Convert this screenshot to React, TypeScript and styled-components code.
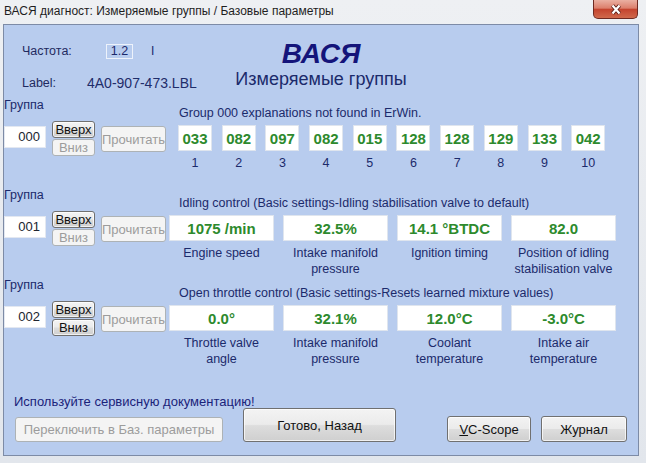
import React from 'react'
import styled, { createGlobalStyle } from 'styled-components'

const GlobalStyle = createGlobalStyle`
  html, body {
    margin: 0;
    padding: 0;
  }
  body {
    font-family: "Liberation Sans", Arial, sans-serif;
    background: #e9ecf0;
  }
`

interface Cell {
  value: string
  caption: string
}

interface Group {
  id: string
  desc: string
  downEnabled: boolean
  dense: boolean
  cells: Cell[]
}

const rawBlock = ['033', '082', '097', '082', '015', '128', '128', '129', '133', '042']

const groups: Group[] = [
  {
    id: '000',
    desc: 'Group 000 explanations not found in ErWin.',
    downEnabled: false,
    dense: true,
    cells: rawBlock.map((v, i) => ({ value: v, caption: String(i + 1) })),
  },
  {
    id: '001',
    desc: 'Idling control (Basic settings-Idling stabilisation valve to default)',
    downEnabled: false,
    dense: false,
    cells: [
      { value: '1075 /min', caption: 'Engine speed' },
      { value: '32.5%', caption: 'Intake manifold\npressure' },
      { value: '14.1 °BTDC', caption: 'Ignition timing' },
      { value: '82.0', caption: 'Position of idling\nstabilisation valve' },
    ],
  },
  {
    id: '002',
    desc: 'Open throttle control (Basic settings-Resets learned mixture values)',
    downEnabled: true,
    dense: false,
    cells: [
      { value: '0.0°', caption: 'Throttle valve\nangle' },
      { value: '32.1%', caption: 'Intake manifold\npressure' },
      { value: '12.0°C', caption: 'Coolant\ntemperature' },
      { value: '-3.0°C', caption: 'Intake air\ntemperature' },
    ],
  },
]

export default function App() {
  return (
    <>
      <GlobalStyle />
      <Window>
        <TitleBar>
          <Caption>ВАСЯ диагност: Измеряемые группы / Базовые параметры</Caption>
          <CloseButton>
            <svg width="14" height="11" viewBox="0 0 14 11">
              <path d="M3.5 1.5 L10.5 9.5 M10.5 1.5 L3.5 9.5" stroke="#5b1d16" strokeWidth="4" />
              <path d="M3.5 1.5 L10.5 9.5 M10.5 1.5 L3.5 9.5" stroke="#ffffff" strokeWidth="2.2" />
            </svg>
          </CloseButton>
        </TitleBar>

        <Client>
          <Header>
            <Info>
              <InfoLabel>Частота:</InfoLabel>
              <FreqRow>
                <FreqBox>1.2</FreqBox>
                <Tick>I</Tick>
              </FreqRow>
              <InfoLabel>Label:</InfoLabel>
              <LabelFile>4A0-907-473.LBL</LabelFile>
            </Info>
            <TitleBlock>
              <Brand>ВАСЯ</Brand>
              <Subtitle>Измеряемые группы</Subtitle>
            </TitleBlock>
            <div />
          </Header>

          {groups.map(g => (
            <GroupBlock key={g.id}>
              <GroupLabel>Группа</GroupLabel>
              <GroupDesc>{g.desc}</GroupDesc>
              <Controls>
                <NumberBox>{g.id}</NumberBox>
                <StepColumn>
                  <Btn $w={43} $h={17}>Вверх</Btn>
                  <Btn $w={43} $h={17} disabled={!g.downEnabled}>Вниз</Btn>
                </StepColumn>
                <Btn $w={65} $h={26} $top={5} disabled>Прочитать</Btn>
              </Controls>
              <Readings $dense={g.dense}>
                {g.cells.map((c, i) => (
                  <Reading key={i}>
                    <ValueBox>{c.value}</ValueBox>
                    <ValueCaption>{c.caption}</ValueCaption>
                  </Reading>
                ))}
              </Readings>
            </GroupBlock>
          ))}

          <Footer>
            <FooterLeft>
              <Notice>Используйте сервисную документацию!</Notice>
              <Btn $w={208} $h={25} $left={1} disabled>Переключить в Баз. параметры</Btn>
            </FooterLeft>
            <Btn $w={153} $h={34} $left={20}>Готово, Назад</Btn>
            <Btn $w={84} $h={26} $left="auto"><u>V</u>C-Scope</Btn>
            <Btn $w={86} $h={26} $left={10}>Журнал</Btn>
          </Footer>
        </Client>
      </Window>
    </>
  )
}

const Window = styled.div`
  width: 646px;
  height: 463px;
  background: linear-gradient(#eef0f3, #e2e6ec);
  display: flex;
  flex-direction: column;
  overflow: hidden;
`

const TitleBar = styled.div`
  height: 24px;
  flex: none;
  display: flex;
  justify-content: space-between;
  align-items: flex-start;
`

const Caption = styled.div`
  padding: 4px 0 0 4px;
  font-size: 12px;
  line-height: 14px;
  color: #1e1e1e;
`

const CloseButton = styled.div`
  width: 45px;
  height: 19px;
  margin-right: 8px;
  box-sizing: border-box;
  border: 1px solid #6e2a22;
  border-top: none;
  border-radius: 0 0 5px 5px;
  background: linear-gradient(#eab0a2 0%, #dc7f6c 45%, #c4442f 52%, #d0694c 100%);
  display: flex;
  align-items: center;
  justify-content: center;
`

const Client = styled.div`
  margin: 0 7px 0 3px;
  height: 432px;
  flex: none;
  box-sizing: border-box;
  border: 1px solid #7d8ba6;
  background: #b8ccee;
  display: flex;
  flex-direction: column;
  color: #1b2a6b;
`

const Header = styled.div`
  height: 72px;
  flex: none;
  display: grid;
  grid-template-columns: 1fr auto 1fr;
`

const Info = styled.div`
  padding: 18px 0 0 18px;
  display: grid;
  grid-template-columns: 65px auto;
  row-gap: 16px;
  align-content: start;
  font-size: 12.5px;
  line-height: 16px;
`

const InfoLabel = styled.div`
  color: #1f2a60;
`

const FreqRow = styled.div`
  display: flex;
  align-items: center;
`

const FreqBox = styled.div`
  margin-left: 19px;
  width: 27px;
  height: 15px;
  box-sizing: border-box;
  border: 1px solid #edf2fb;
  font-size: 12.5px;
  line-height: 13px;
  text-align: center;
`

const Tick = styled.span`
  margin-left: 18px;
  font-size: 12px;
`

const LabelFile = styled.div`
  font-size: 14px;
  color: #1f2d6a;
`

const TitleBlock = styled.div`
  padding-top: 14px;
  text-align: center;
`

const Brand = styled.div`
  font-size: 28px;
  line-height: 29px;
  font-weight: bold;
  font-style: italic;
  color: #14147a;
`

const Subtitle = styled.div`
  margin-top: 1px;
  font-size: 18px;
  line-height: 20px;
  color: #1b2a6b;
`

const GroupBlock = styled.div`
  height: 90px;
  flex: none;
  display: grid;
  grid-template-columns: 162px 1fr;
  grid-template-rows: 24px auto;
  font-size: 12.5px;
`

const GroupLabel = styled.div`
  line-height: 16px;
  align-self: start;
`

const GroupDesc = styled.div`
  padding-left: 13px;
  line-height: 16px;
  align-self: end;
  white-space: nowrap;
`

const Controls = styled.div`
  display: flex;
  align-items: flex-start;
  gap: 6px;
`

const NumberBox = styled.div`
  margin-top: 5px;
  width: 42px;
  height: 22px;
  box-sizing: border-box;
  padding-right: 5px;
  background: #ffffff;
  border: 1px solid #e3e8f1;
  font-size: 13px;
  line-height: 20px;
  text-align: right;
  color: #202530;
`

const StepColumn = styled.div`
  display: flex;
  flex-direction: column;
  gap: 1px;
`

const Btn = styled.button<{ $w: number; $h: number; $top?: number; $left?: number | 'auto' }>`
  width: ${p => p.$w}px;
  height: ${p => p.$h}px;
  margin-top: ${p => p.$top ?? 0}px;
  margin-left: ${p => (p.$left === 'auto' ? 'auto' : `${p.$left ?? 0}px`)};
  flex: none;
  box-sizing: border-box;
  padding: 0;
  font-family: inherit;
  font-size: 13px;
  color: #111111;
  border: 1px solid #707070;
  border-radius: 3px;
  background: linear-gradient(#f3f3f3 0%, #ebebeb 48%, #dddddd 52%, #cfcfcf 100%);
  box-shadow: inset 0 0 0 1px rgba(255, 255, 255, 0.7);
  white-space: nowrap;

  &:disabled {
    border-color: #adb2b5;
    background: #f4f4f4;
    color: #9c9c9c;
    box-shadow: none;
  }

  u {
    text-decoration: underline;
  }
`

const Readings = styled.div<{ $dense: boolean }>`
  display: grid;
  grid-template-columns: repeat(${p => (p.$dense ? 10 : 4)}, ${p => (p.$dense ? 34 : 105)}px);
  column-gap: ${p => (p.$dense ? 9.7 : 9)}px;
  padding-left: ${p => (p.$dense ? 12 : 3)}px;
  align-content: start;
`

const Reading = styled.div`
  display: flex;
  flex-direction: column;
`

const ValueBox = styled.div`
  margin-top: 4px;
  height: 26px;
  box-sizing: border-box;
  background: #ffffff;
  border: 1px solid #dfe5ee;
  display: flex;
  align-items: center;
  justify-content: center;
  font-size: 15px;
  font-weight: bold;
  color: #2d8a2d;
  white-space: nowrap;
`

const ValueCaption = styled.div`
  margin-top: 4px;
  line-height: 16px;
  text-align: center;
  white-space: pre-line;
`

const Footer = styled.div`
  flex: 1;
  display: flex;
  align-items: flex-end;
  padding: 0 11px 13px 10px;
`

const FooterLeft = styled.div`
  width: 209px;
  flex: none;
  display: flex;
  flex-direction: column;
  gap: 7px;
`

const Notice = styled.div`
  font-size: 13px;
  line-height: 16px;
  white-space: nowrap;
  color: #1a237a;
`
